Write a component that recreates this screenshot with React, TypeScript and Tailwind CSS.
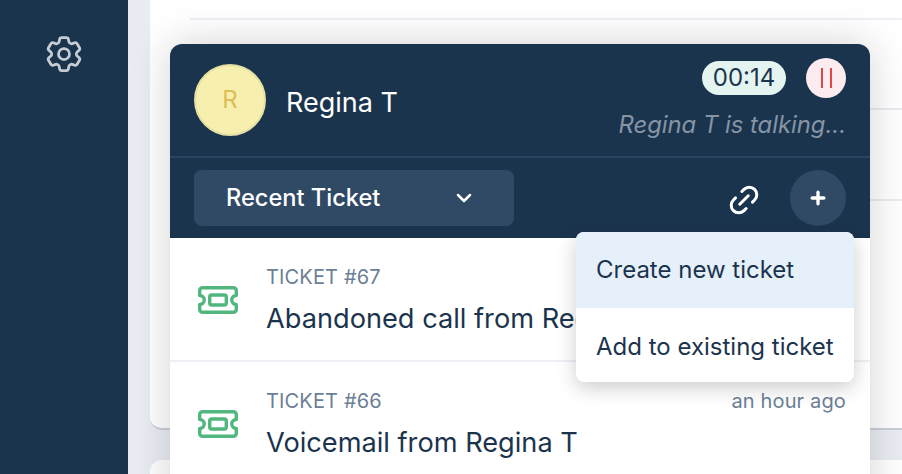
import React from 'react';
import { ChevronDown, Link2, Plus } from 'lucide-react';
import { HiOutlineCog6Tooth } from 'react-icons/hi2';

const TicketIcon = () => (
  <svg width="40" height="28" viewBox="0 0 40 28" fill="none" stroke="#52b77f" strokeWidth="3.4" strokeLinejoin="round">
    <path d="M4.500 1.700h31a2.800 2.800 0 0 1 2.800 2.800v5a4.500 4.500 0 0 0 0 9v5a2.800 2.800 0 0 1-2.800 2.800h-31a2.800 2.800 0 0 1-2.800-2.800v-5a4.500 4.500 0 0 0 0-9v-5a2.800 2.800 0 0 1 2.800-2.800z" />
    <rect x="11.700" y="9" width="16.600" height="10" rx="2" />
  </svg>
);

const TicketRow = ({ number, title, time }: { number: string; title: string; time?: string }) => (
  <div className="flex h-[124px] shrink-0 items-start border-b-2 border-[#edf1f5] pl-7 pr-6">
    <div className="mt-[48px] w-[68px] shrink-0">
      <TicketIcon />
    </div>
    <div className="min-w-0 flex-1 pt-[25px]">
      <div className="flex items-center justify-between text-[20px] leading-[28px] tracking-[0.15px] text-[#6b7f96]">
        <span>{number}</span>
        {time && <span>{time}</span>}
      </div>
      <div className="mt-[10px] whitespace-nowrap text-[27.200px] leading-[36px] text-[#1b344d]">{title}</div>
    </div>
  </div>
);

const CallPopup = () => (
  <div className="absolute left-[170px] top-[44px] h-[600px] w-[700px] overflow-hidden rounded-t-xl bg-white shadow-[0_0_40px_rgba(0,0,0,0.18)]">
    <div className="bg-[#1b344d]">
      <div className="flex h-[114px] items-center border-b-2 border-[#2b4560] pl-6 pr-6">
        <div className="flex h-[72px] w-[72px] items-center justify-center rounded-full border-2 border-[#e6dfa3] bg-[#f6efae] text-[24px] text-[#dfbd55]">
          R
        </div>
        <div className="ml-5 mt-[6px] text-[27px] text-white">Regina T</div>
        <div className="ml-auto flex flex-col items-end">
          <div className="flex items-center gap-5">
            <div className="flex h-[34px] w-[84px] items-center justify-center rounded-full bg-[#e4f4f0] text-[24px] text-[#1b344d]">
              00:14
            </div>
            <div className="flex h-10 w-10 items-center justify-center gap-[7px] rounded-full bg-[#fcecef]">
              <span className="h-5 w-[2px] bg-[#e0474c]" />
              <span className="h-5 w-[2px] bg-[#e0474c]" />
            </div>
          </div>
          <div className="mt-[9px] text-[23.800px] italic leading-[36px] text-[#8595a6]">Regina T is talking...</div>
        </div>
      </div>
      <div className="flex h-[80px] items-start pl-6 pr-6 pt-[12px]">
        <div className="flex h-14 w-[320px] items-center justify-between rounded-lg bg-[#304a65] pl-[32px] pr-[38px] text-[23.600px] font-medium text-white">
          <span>Recent Ticket</span>
          <ChevronDown size={24} strokeWidth={2.5} />
        </div>
        <div className="ml-auto flex items-center gap-[28px]">
          <Link2 size={36} strokeWidth={2} className="mt-[4px] -rotate-45 text-white" />
          <div className="flex h-14 w-14 items-center justify-center rounded-full bg-[#304a65] text-white">
            <Plus size={20} strokeWidth={4} />
          </div>
        </div>
      </div>
    </div>
    <TicketRow number="TICKET #67" title="Abandoned call from Regina T" />
    <TicketRow number="TICKET #66" title="Voicemail from Regina T" time="an hour ago" />
  </div>
);

export default function App() {
  return (
    <div className="relative flex h-[474px] w-[902px] overflow-hidden bg-[#e9edf3] font-['Inter',sans-serif]">
      <aside className="flex w-[128px] shrink-0 justify-center bg-[#1b344d] pt-[32px]">
        <HiOutlineCog6Tooth size={44} className="text-[#c5ccd4]" />
      </aside>
      <main className="ml-[22px] min-w-0 flex-1">
        <div className="h-[430px] rounded-bl-xl border-b-2 border-[#c9d0da] bg-white pl-10">
          <div className="h-[20px] border-b-2 border-[#edf1f5]" />
          <div className="h-[90px] border-b-2 border-[#e9edf3]" />
          <div className="h-[91px] border-b-2 border-[#e9edf3]" />
        </div>
        <div className="mt-[30px] h-10 rounded-tl-xl bg-white" />
      </main>
      <CallPopup />
      <div className="absolute left-[576px] top-[232px] w-[278px] overflow-hidden rounded-lg bg-white text-[24px] text-[#1b344d] shadow-[0_6px_20px_rgba(0,0,0,0.2)]">
        <div className="flex h-[76px] items-center bg-[#e6f0fa] px-5">Create new ticket</div>
        <div className="flex h-[74px] items-center px-5 pt-[3px]">Add to existing ticket</div>
      </div>
    </div>
  );
}
